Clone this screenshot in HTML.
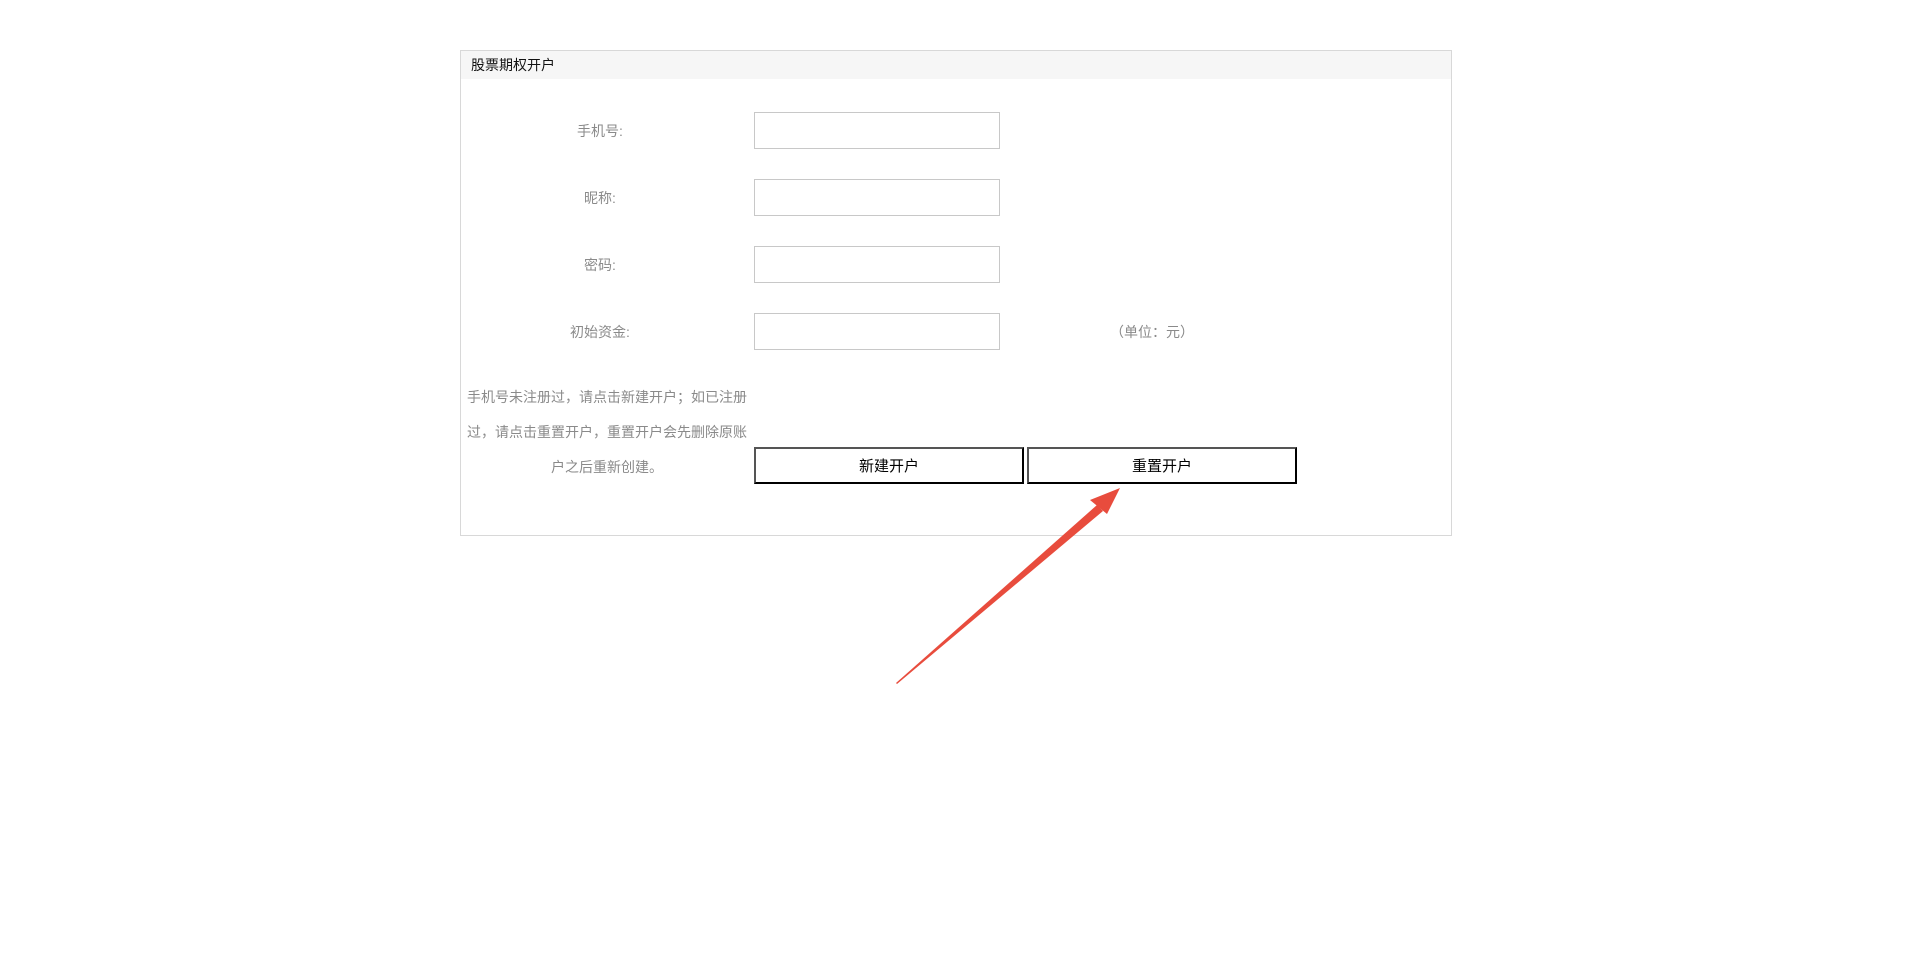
<!DOCTYPE html>
<html><head><meta charset="utf-8"><style>
body{margin:0;width:1912px;height:962px;background:#fff;position:relative;font-family:"Liberation Sans","Noto Sans CJK SC",sans-serif;overflow:hidden}
.panel{position:absolute;left:460px;top:50px;width:990px;height:484px;border:1px solid #d8d8d8}
.hd{height:28px;background:#f6f6f6;font-size:14px;line-height:28px;padding-left:10px;color:#111}
.lbl{position:absolute;width:200px;left:500px;text-align:center;font-size:14px;color:#8a8a8a}
.inp{position:absolute;left:754px;width:244px;height:35px;border:1px solid #c8c8c8}
.note{position:absolute;left:460px;width:294px;font-size:14px;color:#8a8a8a;line-height:35px;text-align:center;top:380px;white-space:nowrap}
.btn{position:absolute;top:447px;height:33px;width:266px;border:2px solid #000;border-top-color:#555;border-left-color:#555;font-size:15px;text-align:center;line-height:36px;color:#000}
</style></head><body>
<div class="panel"><div class="hd">股票期权开户</div></div>
<div class="lbl" style="top:121px">手机号:</div><div class="inp" style="top:112px"></div>
<div class="lbl" style="top:188px">昵称:</div><div class="inp" style="top:179px"></div>
<div class="lbl" style="top:255px">密码:</div><div class="inp" style="top:246px"></div>
<div class="lbl" style="top:322px">初始资金:</div><div class="inp" style="top:313px"></div>
<div style="position:absolute;left:1110px;top:322px;font-size:14px;color:#8a8a8a">（单位：元）</div>
<div class="note">手机号未注册过，请点击新建开户；如已注册<br>过，请点击重置开户，重置开户会先删除原账<br>户之后重新创建。</div>
<div class="btn" style="left:754px">新建开户</div>
<div class="btn" style="left:1027px">重置开户</div>
<svg style="position:absolute;left:0;top:0" width="1912" height="962"><polygon points="896,683 1097,505 1103,511 897,684" fill="#e84c3d"/><polygon points="1120,488 1090,500 1107,514" fill="#e84c3d"/></svg>
</body></html>
